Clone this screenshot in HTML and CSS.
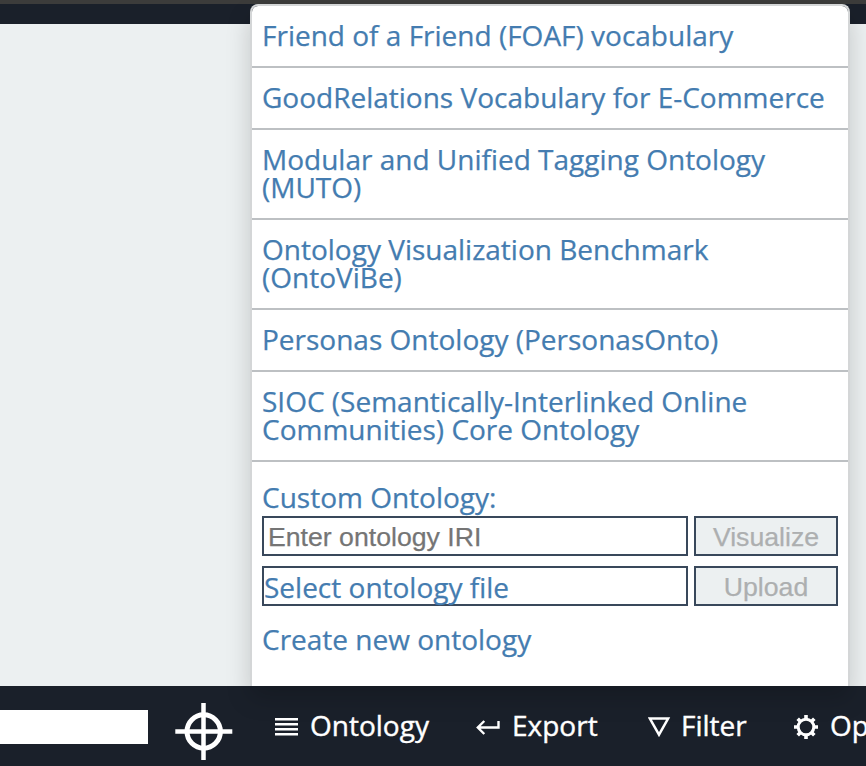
FILE: index.html
```html
<!DOCTYPE html>
<html lang="en">
<head>
<meta charset="utf-8">
<title>Ontology menu</title>
<link rel="stylesheet" href="styles.css">
</head>
<body>
<div class="window-edge"></div>
<header class="top-bar"></header>
<main class="canvas"></main>
<nav class="toolbar">
  <div class="search"></div>
  <svg class="locate" width="58" height="58" viewBox="0 0 58 58" fill="none" stroke="#fff"><circle cx="28.700" cy="28.500" r="16.700" stroke-width="5"/><path d="M28.500 0v57M.3 28.500h57" stroke-width="4.500"/></svg>
  <a class="item ontology"><svg width="24" height="20" viewBox="0 0 24 20" fill="none" stroke="#fff" stroke-width="2.600"><path d="M0 2.300h23M0 7.300h23M0 12.300h23M0 17.300h23"/></svg><span>Ontology</span></a>
  <a class="item export"><svg width="24" height="20" viewBox="0 0 24 20" fill="none" stroke="#fff" stroke-width="2.400"><path d="M22.500 4v6.500H1.800M8.300 4l-6.500 6.500L8.300 17"/></svg><span>Export</span></a>
  <a class="item filter"><svg width="24" height="20" viewBox="0 0 24 20" fill="none" stroke="#fff" stroke-width="2.500"><path d="M1.900 1.600h18.200L11 17.700z"/></svg><span>Filter</span></a>
  <a class="item options"><svg width="24" height="24" viewBox="0 0 24 24" fill="none" stroke="#fff"><circle cx="12" cy="12" r="7.800" stroke-width="3"/><path d="M12 0v4M12 20v4M0 12h4M20 12h4M3.700 3.700l3 3M17.300 17.300l3 3M3.700 20.300l3-3M17.300 6.700l3-3" stroke-width="3.600"/></svg><span>Options</span></a>
</nav>
<section class="menu">
  <ul class="list">
    <li>Friend of a Friend (FOAF) vocabulary</li>
    <li>GoodRelations Vocabulary for E-Commerce</li>
    <li>Modular and Unified Tagging Ontology (MUTO)</li>
    <li>Ontology Visualization Benchmark (OntoViBe)</li>
    <li>Personas Ontology (PersonasOnto)</li>
    <li>SIOC (Semantically-Interlinked Online Communities) Core Ontology</li>
  </ul>
  <form class="custom">
    <label class="title">Custom Ontology:</label>
    <div class="row"><input class="field" type="text" placeholder="Enter ontology IRI"><button class="button" disabled>Visualize</button></div>
    <div class="row"><label class="field file">Select ontology file</label><button class="button" disabled>Upload</button></div>
    <a class="create">Create new ontology</a>
  </form>
</section>
</body>
</html>
```
FILE: styles.css
```css
* { box-sizing: border-box; }
body {
  margin: 0;
  height: 766px;
  display: flex;
  flex-direction: column;
  position: relative;
  overflow: hidden;
  background: #ecf0f1;
  font: 28px/28px "Open Sans", sans-serif;
  color: #447cb0;
  -webkit-text-stroke: .25px;
}
.window-edge { height: 4px; background: #3c3c3b; }
.top-bar { height: 20px; background: #1a202a; }
.canvas { flex: 1; }
.toolbar {
  height: 80px;
  background: #1a202a;
  color: #fff;
  display: flex;
  align-items: flex-start;
  white-space: nowrap;
  overflow: hidden;
  -webkit-text-stroke: .4px;
}
.search { width: 148px; height: 34px; margin-top: 24px; background: #fff; flex: none; }
.locate { margin: 17px 0 0 27px; flex: none; }
.item { display: flex; align-items: center; height: 28px; margin-top: 25px; flex: none; }
.item svg { flex: none; margin: 4px 11px 0 0; }
.ontology { width: 201px; margin-left: 42px; }
.export { width: 172px; }
.export svg { margin-right: 12px; }
.filter { width: 146px; }
.filter svg { margin-right: 9px; }
.options svg { margin-right: 12px; }
.menu {
  position: absolute;
  left: 250px;
  top: 4px;
  width: 600px;
  height: 682px;
  border: 2px solid #d4d6d7;
  border-bottom: 0;
  border-radius: 8px 8px 0 0;
  background: #fff;
  box-shadow: 0 12px 24px rgba(0, 0, 0, .175);
  background-clip: padding-box;
}
.list { margin: 0; padding: 0; list-style: none; }
.list li { padding: 15px 10px 17px; border-bottom: 2px solid #bdc0c3; }
.custom { padding: 21px 10px 0; display: flex; flex-direction: column; }
.title { margin-bottom: 5px; }
.row { display: flex; gap: 6px; height: 40px; margin-bottom: 10px; }
.field {
  width: 426px;
  border: 2px solid #39485b;
  border-radius: 0;
  background: #fff;
  padding: 2px 4px 0;
  margin: 0;
  font: 26.67px "Liberation Sans", sans-serif;
}
.field::placeholder { color: #757575; }
.file { font: 28px/36px "Open Sans", sans-serif; padding: 1px 0 0; }
.button {
  width: 144px;
  border: 2px solid #39485b;
  background: #ecf0f1;
  color: #adafb0;
  padding: 2px 0 0;
  font: 26.67px "Liberation Sans", sans-serif;
}
.create { margin-top: 9px; }
```
